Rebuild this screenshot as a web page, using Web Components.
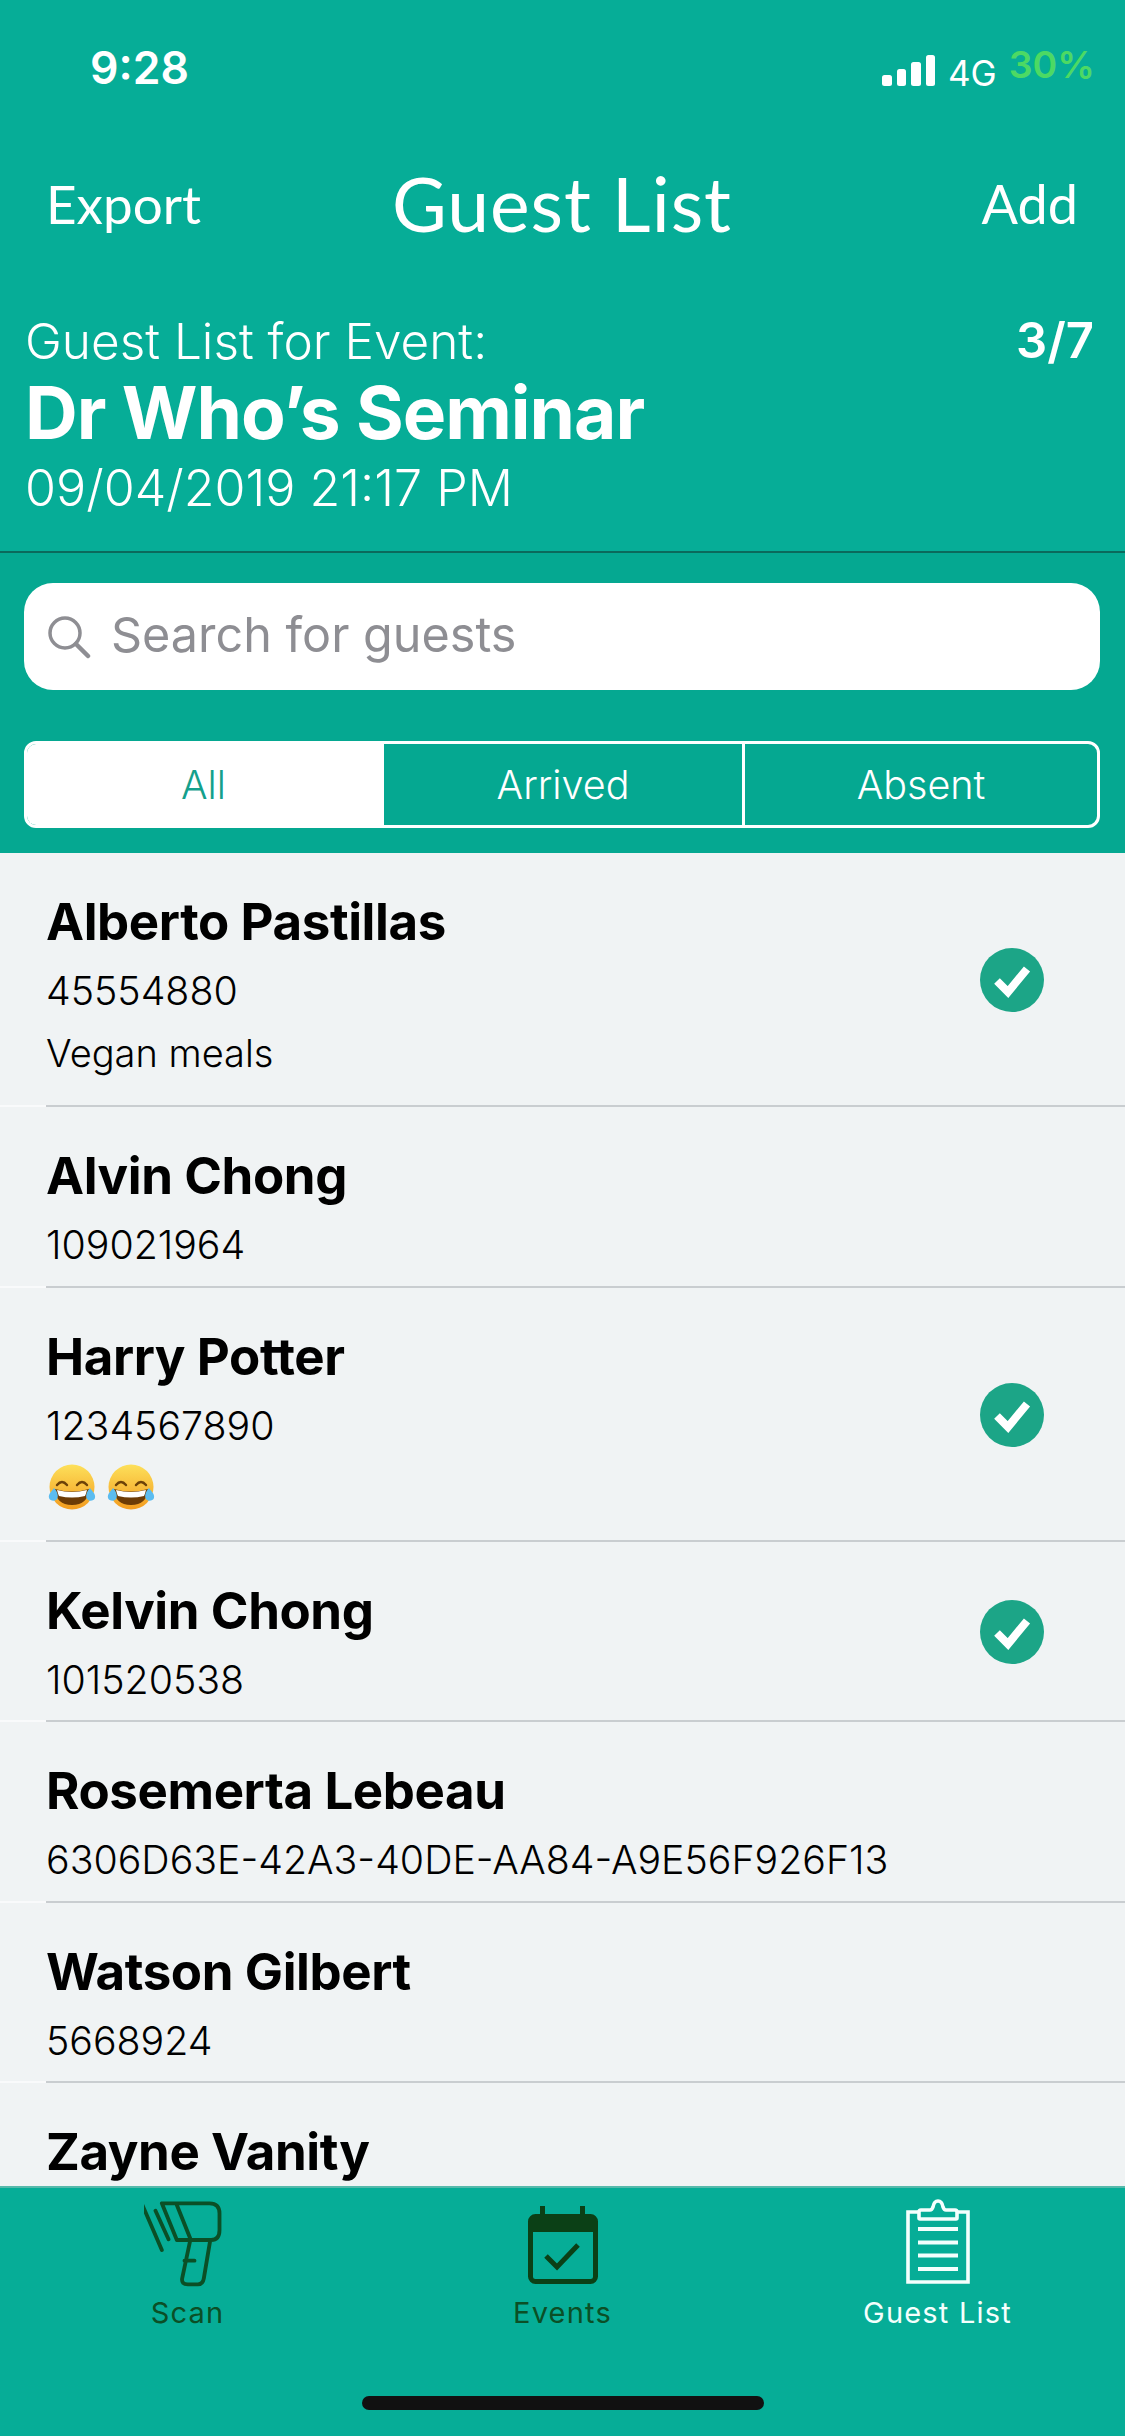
<!DOCTYPE html>
<html><head><meta charset="utf-8">
<style>
html,body{margin:0;padding:0;background:#f0f3f4}
body{width:1125px;height:2436px;overflow:hidden;font-family:Inter,"Liberation Sans",sans-serif}
</style></head><body>
<guest-app></guest-app>
<script>
function def(name, html, init){
  customElements.define(name, class extends HTMLElement{
    constructor(){super();const s=this.attachShadow({mode:'open'});s.innerHTML=html;}
    connectedCallback(){if(init)init(this,this.shadowRoot);}
  });
}
def('status-bar',`<style>
:host{display:flex;height:100px;box-sizing:border-box;padding:36px 30px 0 90px;align-items:center;color:#fff;justify-content:space-between}
.t{font-size:44.5px;font-weight:600;color:#fff}
.r{display:flex;align-items:flex-end;height:40px}
.bars{display:flex;align-items:flex-end;gap:5px;margin-right:13px;margin-bottom:2px}
.bars i{display:block;width:9.5px;background:#fff;border-radius:2.5px}
.g{font-size:35px;line-height:32px;font-weight:400;margin-right:12px;margin-bottom:-1px}
.p{font-size:37.5px;line-height:37px;font-weight:600;color:#4cd964;margin-bottom:5px}
</style><span class="t">9:28</span><div class="r"><div class="bars"><i style="height:11px"></i><i style="height:17px"></i><i style="height:24px"></i><i style="height:31px"></i></div><span class="g">4G</span><span class="p">30%</span></div>`);
def('nav-bar',`<style>
:host{display:grid;grid-template-columns:1fr auto 1fr;align-items:center;height:110px;padding:0 47px 0 46px;color:#fff;font-family:Lato,sans-serif;margin-top:48px}
.a{font-size:53px}.b{font-size:75px;letter-spacing:1px}.c{font-size:54px;text-align:right}
</style><span class="a">Export</span><span class="b">Guest List</span><span class="c">Add</span>`);
def('event-info',`<style>
:host{display:flex;justify-content:space-between;padding:0 31px 0 25px;color:#fff;box-sizing:border-box;border-bottom:2px solid #0b6a5c;margin-top:48px;height:247px;align-items:flex-start}
.l{display:flex;flex-direction:column}
.a{font-size:49.5px;font-weight:300;line-height:70px}
.b{font-size:73px;font-weight:700;line-height:74px;letter-spacing:-1px}
.c{font-size:50.2px;font-weight:300;line-height:76px}
.n{font-size:49px;font-weight:600;line-height:70px}
</style><div class="l"><span class="a">Guest List for Event:</span><span class="b">Dr Who’s Seminar</span><span class="c">09/04/2019 21:17 PM</span></div><span class="n">3/7</span>`);
def('search-box',`<style>
:host{display:flex;align-items:center;height:107px;margin:30px 25px 0 24px;background:#fff;border-radius:29px;color:#8e8e93;font-size:48.5px;font-weight:400;gap:20px;padding-left:23px}
svg{display:block}
span{padding-bottom:5px}
</style><svg width="44" height="44" viewBox="0 0 44 44" fill="none" stroke="#8e8e93" stroke-width="3.5" stroke-linecap="round"><circle cx="18" cy="18" r="15"/><path d="M29 29l12 12" stroke-width="4.5"/></svg><span>Search for guests</span>`);
def('seg-control',`<style>
:host{display:flex;height:87px;box-sizing:border-box;margin:51px 25px 0 24px;border:3px solid #fff;border-radius:12px;overflow:hidden;color:#fff;font-size:39.5px;font-weight:300}
span{display:flex;align-items:center;justify-content:center}
.on{background:#fff;color:#14a08c;flex:none;width:357px;box-sizing:border-box;padding-right:4px}
.m{flex:none;width:358px}
.d{border-left:3px solid #fff;flex:1}
</style><span class="on">All</span><span class="m">Arrived</span><span class="d">Absent</span>`);
def('guest-row',`<style>
:host{display:block;color:#000}
.m{display:flex;align-items:center;padding:34px 81px 9.6px 46px}
.l{flex:1;min-width:0}
.n{font-size:51px;font-weight:700;line-height:70px;margin-bottom:3px;letter-spacing:-.4px;white-space:nowrap}
.s{font-size:39.3px;font-weight:300;line-height:62px;white-space:nowrap}
.x{display:none;font-size:38px}
:host([note]) .x{display:block;margin-bottom:11.4px}
.c{display:none;width:64px;height:64px;flex:none;margin-bottom:22px}
:host([checked]) .c{display:block}
.line{display:flex;height:2px}
.line b{width:46px;background:#f9fafb}.line i{flex:1;background:#c9cdd0}
:host([last]) .line{display:none}
</style><div class="m"><div class="l"><div class="n"><slot name="name"></slot></div><div class="s"><slot name="id"></slot></div><div class="s x"><slot name="note"></slot></div></div>
<svg class="c" viewBox="0 0 64 64"><circle cx="32" cy="32" r="32" fill="#1ca587"/><path d="M17 33l11 11 19-23" fill="none" stroke="#fff" stroke-width="8"/></svg></div><div class="line"><b></b><i></i></div>`);
const face=`<svg width="48" height="46" viewBox="0 0 48 46" style="display:block"><defs><linearGradient id="f" x1="0" y1="0" x2="0" y2="1"><stop offset="0" stop-color="#fde05a"/><stop offset="1" stop-color="#f39c1f"/></linearGradient></defs><circle cx="24" cy="23" r="22.5" fill="url(#f)"/><path d="M9 21q5-6 10 0M29 21q5-6 10 0" fill="none" stroke="#6d4208" stroke-width="2.4" stroke-linecap="round"/><path d="M7 25q17 5 34 0q-1 16-17 16T7 25z" fill="#6d3c06"/><path d="M9 26q15 4 30 0q-1 4-2 6q-13 3-26 0q-1-2-2-6z" fill="#fff"/><path d="M6 24c-2 3-6 6-5 10c1 3 6 4 8 1c2-3 0-8-3-11zM42 24c2 3 6 6 5 10c-1 3-6 4-8 1c-2-3 0-8 3-11z" fill="#5bbcf0"/></svg>`;
def('laugh-emoji',`<style>:host{display:inline-block;vertical-align:middle;width:48px;height:46px;margin:-9px 9px 0 2px}</style>${face}`);
def('tab-item',`<style>
:host{display:flex;flex:1;flex-direction:column;align-items:center;color:#0b4f26;font-size:29px;letter-spacing:1.2px}
:host([active]){color:#f4fffd}
.i{height:96px;display:flex;align-items:flex-end;justify-content:center}
.t{margin-top:11px;line-height:36px}
::slotted(svg.sc){margin-bottom:-6px}
</style><div class="i"><slot name="icon"></slot></div><div class="t"><slot></slot></div>`);
def('tab-bar',`<style>
:host{display:flex;height:250px;box-sizing:border-box;background:#06ad97;border-top:2px solid #56b9ab;position:relative;flex:none}
.h{position:absolute;left:362px;top:208px;width:402px;height:14px;border-radius:7px;background:#111}
</style><slot></slot><div class="h"></div>`);
def('guest-app',`<style>
:host{display:flex;flex-direction:column;width:1125px;height:2436px;overflow:hidden;background:#f0f3f4}
.head{background:#06ad97;flex:none}
.low{background:#05a891;height:300px;box-sizing:border-box;display:flow-root;flex:none}
.list{flex:1;min-height:0;overflow:hidden}
</style><div class="head"><status-bar></status-bar><nav-bar></nav-bar><event-info></event-info></div>
<div class="low"><search-box></search-box><seg-control></seg-control></div>
<div class="list">
<guest-row checked note><span slot="name">Alberto Pastillas</span><span slot="id">45554880</span><span slot="note">Vegan meals</span></guest-row>
<guest-row><span slot="name">Alvin Chong</span><span slot="id">109021964</span></guest-row>
<guest-row checked note><span slot="name">Harry Potter</span><span slot="id">1234567890</span><span slot="note"><laugh-emoji></laugh-emoji><laugh-emoji></laugh-emoji></span></guest-row>
<guest-row checked><span slot="name">Kelvin Chong</span><span slot="id">101520538</span></guest-row>
<guest-row><span slot="name">Rosemerta Lebeau</span><span slot="id">6306D63E-42A3-40DE-AA84-A9E56F926F13</span></guest-row>
<guest-row><span slot="name">Watson Gilbert</span><span slot="id">5668924</span></guest-row>
<guest-row last><span slot="name">Zayne Vanity</span></guest-row>
</div>
<tab-bar>
<tab-item><svg slot="icon" class="sc" width="87" height="90" viewBox="134 90 260 270" fill="none" stroke="#0b4f26" stroke-width="11.5" stroke-linecap="round" stroke-linejoin="round"><path d="M187 100H330Q360 100 360 130V180Q360 210 335 210H232ZM232 105L272 205M272 212L248 325Q245 343 265 343H295Q310 343 313 325L332 212M255 272H285M130 108L187 240M168 122L207 208"/></svg>Scan</tab-item>
<tab-item><svg slot="icon" width="70" height="78" viewBox="0 0 70 78"><path d="M12 0h5v9h-5zM52 0h5v9h-5z" fill="#0b4016"/><rect x="2.5" y="10.5" width="65" height="65" rx="5" fill="none" stroke="#0b4016" stroke-width="5"/><path d="M2 14q0-5 5-5h56q5 0 5 5v12H2z" fill="#0b4016"/><path d="M18 50l11 11 21-22" fill="none" stroke="#0b4016" stroke-width="5"/></svg>Events</tab-item>
<tab-item active><svg slot="icon" width="64" height="85" viewBox="0 0 64 85" fill="none" stroke="#f4fffd" stroke-width="3.6"><path d="M13 13H2v70h60V13H51"/><path d="M13 19q0 1 1 1h36q1 0 1-1v-6q0-2-2-2H40q-2 0-3-3q-1-6-5-6t-5 6q-1 3-3 3H15q-2 0-2 2z"/><path d="M12 30h40M12 43.5h40M12 56.5h40M12 70h40" stroke-width="4"/></svg>Guest List</tab-item>
</tab-bar>`);
</script>
</body></html>
